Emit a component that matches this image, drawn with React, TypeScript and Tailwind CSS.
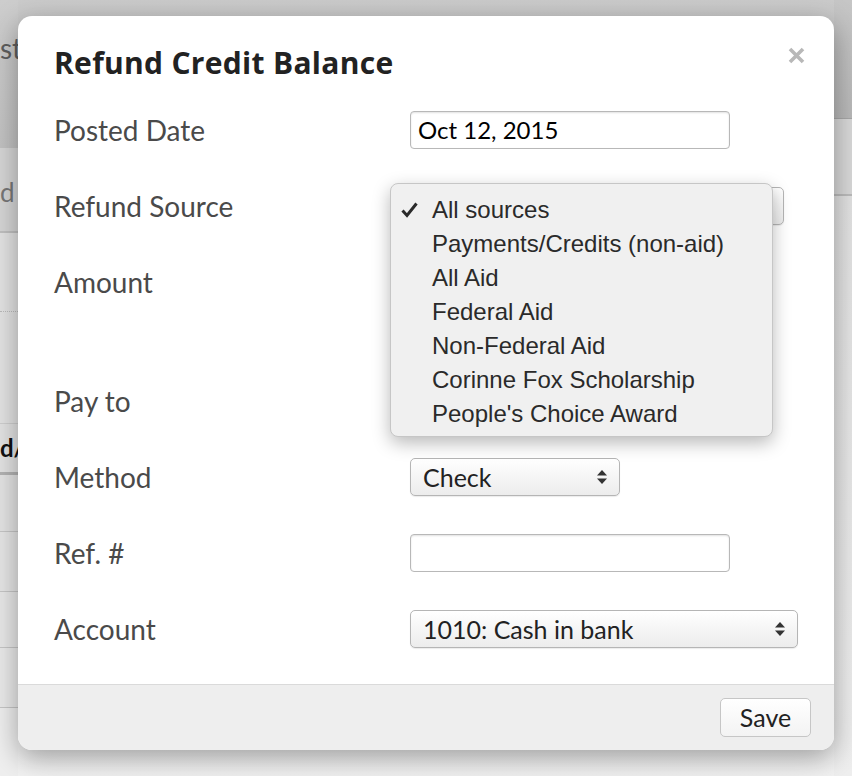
import React from 'react';

const sources = [
  'All sources',
  'Payments/Credits (non-aid)',
  'All Aid',
  'Federal Aid',
  'Non-Federal Aid',
  'Corinne Fox Scholarship',
  "People's Choice Award",
];

const UpDown: React.FC = () => (
  <svg width="12" height="16" viewBox="0 0 12 16" className="shrink-0">
    <path d="M6 1 L11 6.5 L1 6.5 Z" fill="#333" />
    <path d="M6 15 L11 9.5 L1 9.5 Z" fill="#333" />
  </svg>
);

const FakeSelect: React.FC<{ value?: string; className?: string }> = ({ value, className = '' }) => (
  <div
    className={`flex items-center justify-between h-[38px] pl-[12px] pr-[11px] border border-[#b5b5b5] rounded-[5px] bg-gradient-to-b from-white to-[#ececec] shadow-[0_1px_1px_rgba(0,0,0,0.08)] text-[25px] text-[#222] ${className}`}
  >
    <span className="leading-none">{value}</span>
    <UpDown />
  </div>
);

const TextField: React.FC<{ value?: string }> = ({ value }) => (
  <div className="flex items-center h-[38px] w-[320px] pl-[7px] border border-[#b8b8b8] rounded-[4px] bg-white shadow-[inset_0_1px_2px_rgba(0,0,0,0.12)] text-[24px] text-black">
    <span className="leading-none">{value}</span>
  </div>
);

const Row: React.FC<{ label: string; children?: React.ReactNode; tall?: boolean }> = ({ label, children, tall }) => (
  <div className={`flex ${tall ? 'h-[119px] items-start' : 'h-[76px] items-center'}`}>
    <div className={`w-[356px] shrink-0 text-[28px] text-[#4a4a4a] ${tall ? 'leading-[76px]' : 'leading-none'}`}>{label}</div>
    <div className={`flex-1 ${tall ? 'pt-[19px]' : ''}`}>{children}</div>
  </div>
);

export default function App() {
  return (
    <div className="relative w-[852px] h-[776px] overflow-hidden bg-[#e8e8e8]" style={{ fontFamily: 'Lato, "Open Sans", sans-serif' }}>
      {/* page behind the overlay */}
      <div className="flex h-full">
        <div className="w-[18px] shrink-0 flex flex-col">
          <div className="h-[148px] bg-gradient-to-b from-[#cdcdcd] to-[#c2c2c2] flex items-start pt-[34px] text-[28px] text-[#5e5e5e] leading-none whitespace-nowrap">st</div>
          <div className="h-[85px] bg-[#d6d6d6] border-b-2 border-[#c0c0c0] flex items-center text-[26px] text-[#777] leading-none pt-[4px]">d</div>
          <div className="h-[190px] bg-[#e3e3e3] flex flex-col">
            <div className="h-[78px]" />
            <div className="border-t border-dotted border-[#bbb]" />
          </div>
          <div className="h-[52px] bg-[#e3e3e3] border-t border-[#cfcfcf] border-b-[3px] border-b-[#b3b3b3] flex items-center text-[24px] font-bold text-[#111] leading-none whitespace-nowrap">d/</div>
          <div className="h-[57px] bg-[#e4e4e4] border-b border-[#c6c6c6]" />
          <div className="h-[60px] bg-[#e6e6e6] border-b border-[#c6c6c6]" />
          <div className="h-[56px] bg-[#e8e8e8] border-b border-[#c6c6c6]" />
          <div className="h-[60px] bg-[#eaeaea] border-b border-[#c6c6c6]" />
          <div className="flex-1 bg-[#efefef]" />
        </div>
        <div className="flex-1 flex flex-col">
          <div className="h-[119px] bg-gradient-to-b from-[#cbcbcb] to-[#bdbdbd] border-b border-[#a8a8a8]" />
          <div className="flex-1 bg-gradient-to-b from-[#e0e0e0] to-[#f2f2f2]" />
        </div>
        <div className="w-[18px] shrink-0 flex flex-col">
          <div className="h-[119px] bg-gradient-to-b from-[#c6c6c6] to-[#b9b9b9] border-b border-[#a8a8a8]" />
          <div className="h-[77px] bg-[#d9d9d9] border-b-2 border-[#bcbcbc]" />
          <div className="flex-1 bg-gradient-to-b from-[#e2e2e2] to-[#efefef]" />
        </div>
      </div>

      {/* modal */}
      <div className="absolute left-[18px] top-[16px] w-[816px] h-[734px] rounded-[14px] bg-white shadow-[0_8px_28px_rgba(0,0,0,0.35)] flex flex-col">
        <div className="flex-1 px-[36px] pt-[28px] relative">
          <h2 className="text-[30px] leading-[38px] font-bold text-[#222] tracking-[0.3px]" style={{ fontFamily: '"Open Sans", Lato, sans-serif' }}>
            Refund Credit Balance
          </h2>
          <button className="absolute right-[29px] top-[30px] w-[18px] h-[18px] flex items-center justify-center">
            <svg width="17" height="17" viewBox="0 0 17 17">
              <path d="M2 2 L15 15 M15 2 L2 15" stroke="#b8b8b8" strokeWidth="3.6" strokeLinecap="butt" />
            </svg>
          </button>

          <div className="mt-[10px] flex flex-col">
            <Row label="Posted Date">
              <TextField value="Oct 12, 2015" />
            </Row>
            <Row label="Refund Source">
              <div className="relative w-[374px]">
                <FakeSelect className="w-[374px] h-[37px]" />
                <div className="absolute left-[-20px] top-[-4px] w-[383px] h-[254px] pt-[9px] rounded-[8px] bg-[#f0f0f0] border border-[#c6c6c6] shadow-[0_6px_18px_rgba(0,0,0,0.28)] z-10" style={{ fontFamily: '"Liberation Sans", Arial, sans-serif' }}>
                  {sources.map((s, i) => (
                    <div key={s} className="flex items-center h-[34px] text-[24px] text-[#2a2a2a]">
                      <div className="w-[41px] shrink-0 flex justify-end pr-[14px]">
                        {i === 0 && (
                          <svg width="17" height="16" viewBox="0 0 17 16">
                            <path d="M1.5 8.5 L6 13.5 L15.5 1.5" fill="none" stroke="#2a2a2a" strokeWidth="3" strokeLinejoin="miter" />
                          </svg>
                        )}
                      </div>
                      <span className="leading-none">{s}</span>
                    </div>
                  ))}
                </div>
              </div>
            </Row>
            <Row label="Amount" tall>
              <TextField />
            </Row>
            <Row label="Pay to">
              <TextField />
            </Row>
            <Row label="Method">
              <FakeSelect value="Check" className="w-[210px]" />
            </Row>
            <Row label="Ref. #">
              <TextField />
            </Row>
            <Row label="Account">
              <FakeSelect value="1010: Cash in bank" className="w-[388px]" />
            </Row>
          </div>
        </div>

        <div className="h-[66px] shrink-0 rounded-b-[14px] bg-[#eeeeee] border-t border-[#dadada] flex items-center justify-end pr-[23px]">
          <button className="w-[91px] h-[39px] rounded-[5px] border border-[#c6c6c6] bg-gradient-to-b from-white to-[#f3f3f3] text-[25px] text-[#222] leading-none">
            Save
          </button>
        </div>
      </div>
    </div>
  );
}
